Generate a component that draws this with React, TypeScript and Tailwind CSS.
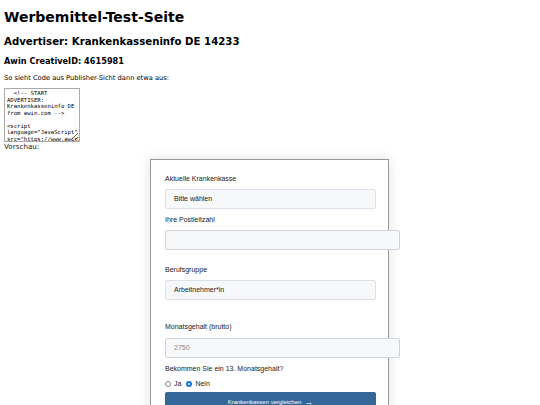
import React from 'react';

const codeSnippet = `  <!-- START
ADVERTISER:
Krankenkasseninfo DE
from awin.com -->

<script
language="JavaScript"
src="https://www.awin1.com/cawshow.php?v=14233&s=4615981&q=1&r=0"></script>`;

function Field({ label, children, className }: { label: string; children: React.ReactNode; className?: string }) {
  return (
    <div className={className}>
      <div className="text-[7px] leading-[9px] text-[#222]">{label}</div>
      {children}
    </div>
  );
}

export default function App() {
  return (
    <div className="w-[540px] h-[405px] overflow-hidden bg-white text-black px-[4px] font-['DejaVu_Sans',sans-serif]">
      <h1 className="pt-[9px] text-[14px] leading-[17px] font-bold">Werbemittel-Test-Seite</h1>
      <h2 className="mt-[9px] text-[10.2px] leading-[14px] font-bold">Advertiser: Krankenkasseninfo DE 14233</h2>
      <h3 className="mt-[7px] text-[8.2px] leading-[11px] font-bold">Awin CreativeID: 4615981</h3>
      <p className="mt-[7px] text-[6.7px] leading-[8px]">So sieht Code aus Publisher-Sicht dann etwa aus:</p>
      <textarea
        readOnly
        wrap="off"
        defaultValue={codeSnippet}
        className="block mt-[6px] w-[76px] h-[54px] overflow-hidden border border-[#a9a9a9] px-[2px] pt-[1px] font-['DejaVu_Sans_Mono',monospace] text-[5.6px] leading-[6.5px] text-black resize"
      />
      <p className="mt-[1px] text-[7.2px] leading-[8px] text-[#222]">Vorschau:</p>

      <div className="ml-[146px] mt-[8px] w-[239px] h-[260px] border border-[#999] shadow-[0_0_12px_rgba(0,0,0,0.12)] pt-[14px] pl-[14px] font-['Liberation_Sans',sans-serif]">
        <Field label="Aktuelle Krankenkasse">
          <div className="mt-[6px] w-[211px] h-[20px] rounded-[2px] border border-[#dde2ea] bg-[#f7f8fa] pl-[8px] flex items-center text-[7px] text-[#222]">
            Bitte wählen
          </div>
        </Field>
        <Field label="Ihre Postleitzahl" className="mt-[6px]">
          <div className="mt-[6px] w-[235px] h-[20px] rounded-[2px] border border-[#cfd4dc] bg-[#f7f8fa]" />
        </Field>
        <Field label="Berufsgruppe" className="mt-[15px]">
          <div className="mt-[6px] w-[211px] h-[20px] rounded-[2px] border border-[#dde2ea] bg-[#f7f8fa] pl-[8px] flex items-center text-[7px] text-[#222]">
            Arbeitnehmer*in
          </div>
        </Field>
        <Field label="Monatsgehalt (brutto)" className="mt-[22px]">
          <div className="mt-[7px] w-[235px] h-[20px] rounded-[2px] border border-[#cfd4dc] bg-[#f7f8fa] pl-[8px] flex items-center text-[7px] text-[#888]">
            2750
          </div>
        </Field>
        <div className="mt-[6px] text-[7px] leading-[9px] text-[#222]">Bekommen Sie ein 13. Monatsgehalt?</div>
        <div className="mt-[6px] flex items-center gap-[3px] text-[7px] leading-[9px] text-[#222]">
          <span className="w-[6px] h-[6px] rounded-full border border-[#888] bg-white" />
          <span>Ja</span>
          <span className="ml-[2px] w-[6px] h-[6px] rounded-full bg-[#1a73e8] flex items-center justify-center">
            <span className="w-[2px] h-[2px] rounded-full bg-white" />
          </span>
          <span>Nein</span>
        </div>
        <div className="mt-[4px] w-[211px] h-[20px] rounded-[2px] bg-[#336699] flex items-center justify-center gap-[3px] text-[6px] text-white">
          Krankenkassen vergleichen <span className="text-[9px] leading-none font-bold">→</span>
        </div>
      </div>
    </div>
  );
}
